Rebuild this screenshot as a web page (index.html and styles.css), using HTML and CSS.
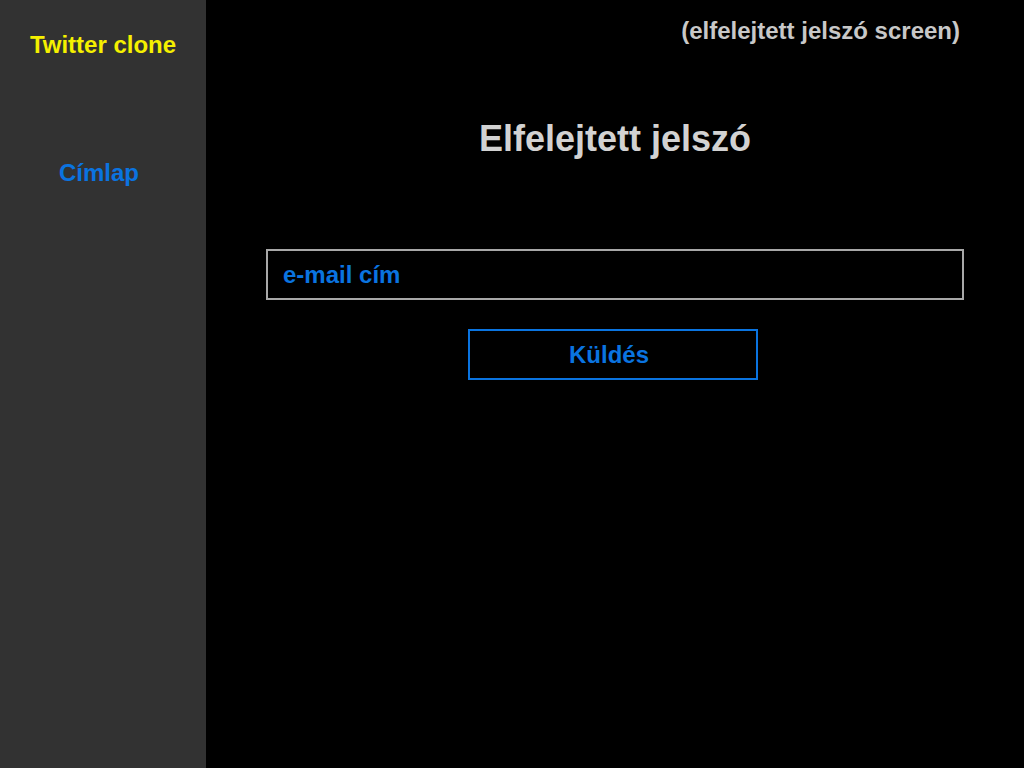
FILE: index.html
```html
<!DOCTYPE html>
<html lang="hu">
<head>
<meta charset="utf-8">
<title>Twitter clone</title>
<link rel="stylesheet" href="styles.css">
</head>
<body>
<div class="app">
  <aside class="sidebar">
    <div class="brand">Twitter clone</div>
    <nav class="nav"><a class="nav-link" href="#">Címlap</a></nav>
  </aside>
  <main class="main">
    <div class="screen-label">(elfelejtett jelszó screen)</div>
    <h1 class="title">Elfelejtett jelszó</h1>
    <form class="form">
      <div class="input">e-mail cím</div>
      <button class="btn" type="button">Küldés</button>
    </form>
  </main>
</div>
</body>
</html>
```
FILE: styles.css
```css
html, body {
  margin: 0;
  padding: 0;
  height: 100%;
  background: #000;
}
body {
  font-family: "Liberation Sans", Arial, sans-serif;
  font-weight: bold;
}
.app {
  display: flex;
  height: 768px;
}
.sidebar {
  width: 206px;
  flex: none;
  background: #323232;
  display: flex;
  flex-direction: column;
  align-items: center;
}
.brand {
  color: #f5f000;
  font-size: 24px;
  line-height: 28px;
  margin-top: 31px;
}
.nav {
  margin-top: 100px;
  padding-right: 8px;
}
.nav-link {
  color: #0a74e0;
  font-size: 24px;
  line-height: 28px;
  text-decoration: none;
}
.main {
  flex: 1;
  display: flex;
  flex-direction: column;
  padding: 17px 60px 0 60px;
}
.screen-label {
  color: #c8c8c8;
  font-size: 24px;
  line-height: 28px;
  align-self: flex-end;
  margin-right: 4px;
}
.title {
  color: #d2d2d2;
  font-size: 36px;
  line-height: 42px;
  margin: 73px 0 0 0;
  text-align: center;
}
.form {
  display: flex;
  flex-direction: column;
  align-items: center;
  margin-top: 89px;
}
.input {
  align-self: stretch;
  height: 47px;
  border: 2px solid #a8a8a8;
  color: #0a74e0;
  font-size: 24px;
  line-height: 47px;
  padding-left: 15px;
}
.btn {
  margin: 29px 4px 0 0;
  width: 290px;
  height: 51px;
  background: #000;
  border: 2px solid #0a74e0;
  color: #0a74e0;
  font-family: inherit;
  font-weight: bold;
  font-size: 24px;
  padding: 0 8px 0 0;
}
```
